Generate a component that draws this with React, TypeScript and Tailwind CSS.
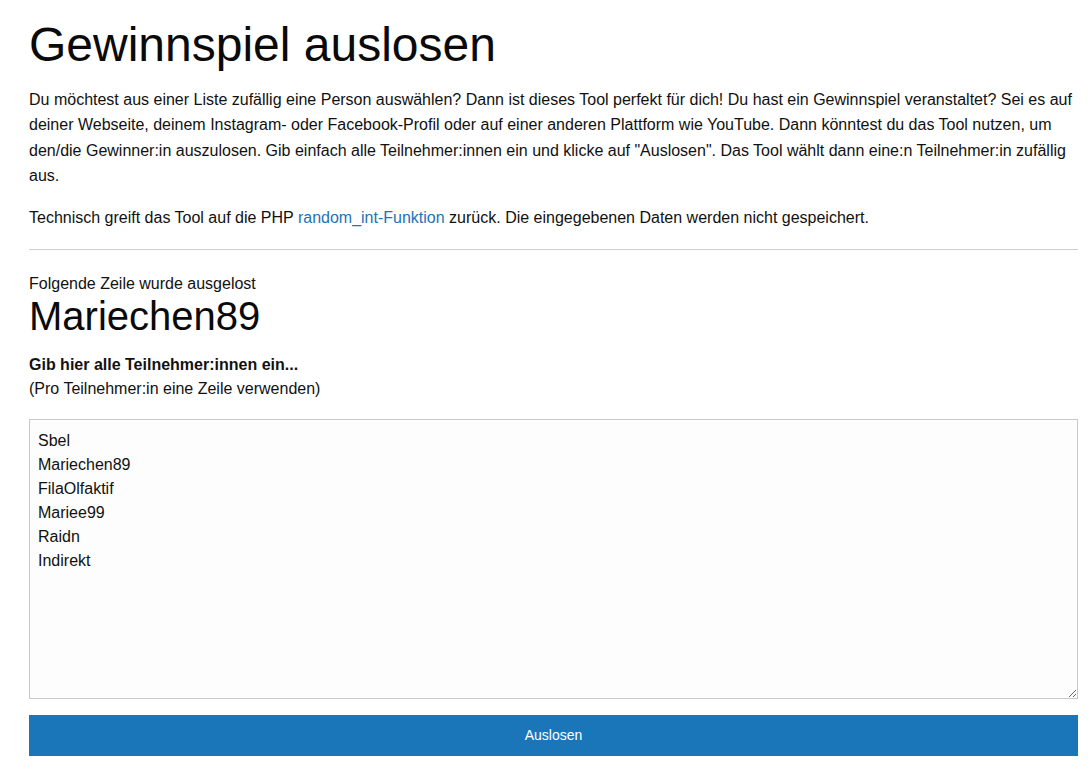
import React, { useState } from 'react';

const participants = ['Sbel', 'Mariechen89', 'FilaOlfaktif', 'Mariee99', 'Raidn', 'Indirekt'];

export default function App() {
  const [entries, setEntries] = useState(participants.join('\n'));
  const [winner, setWinner] = useState('Mariechen89');

  const draw = () => {
    const rows = entries.split('\n').map((r) => r.trim()).filter(Boolean);
    if (rows.length === 0) return;
    setWinner(rows[Math.floor(Math.random() * rows.length)]);
  };

  return (
    <div className="min-h-screen bg-white font-['Liberation_Sans',Arial,sans-serif] text-[#111]">
      <div className="pl-[29px] pr-[13px] pt-[16px] pb-4">
        <h1 className="text-[48px] leading-[1.2] font-normal text-[#0a0a0a]">Gewinnspiel auslosen</h1>

        <p className="mt-[13px] text-[16px] leading-[1.6]">
          Du möchtest aus einer Liste zufällig eine Person auswählen? Dann ist dieses Tool perfekt für dich! Du hast ein
          Gewinnspiel veranstaltet? Sei es auf deiner Webseite, deinem Instagram- oder Facebook-Profil oder auf einer
          anderen Plattform wie YouTube. Dann könntest du das Tool nutzen, um den/die Gewinner:in auszulosen. Gib einfach
          alle Teilnehmer:innen ein und klicke auf "Auslosen". Das Tool wählt dann eine:n Teilnehmer:in zufällig aus.
        </p>
        <p className="mt-4 text-[16px] leading-[1.6]">
          Technisch greift das Tool auf die PHP{' '}
          <a href="#" className="text-[#1d73b8]">
            random_int-Funktion
          </a>{' '}
          zurück. Die eingegebenen Daten werden nicht gespeichert.
        </p>

        <hr className="mt-[18px] border-0 border-t border-[#cfcfcf]" />

        <div className="mt-[21px] text-[16px] leading-[1.6]">Folgende Zeile wurde ausgelost</div>
        <div className="text-[40px] leading-none text-[#0a0a0a]">{winner}</div>

        <div className="mt-[17px] text-[16px] leading-[1.5]">
          <div className="font-bold">Gib hier alle Teilnehmer:innen ein...</div>
          <div>(Pro Teilnehmer:in eine Zeile verwenden)</div>
        </div>

        <textarea
          value={entries}
          onChange={(e) => setEntries(e.target.value)}
          className="mt-[18px] block w-full h-[280px] border border-[#c9c9c9] bg-[#fdfdfd] px-2 pt-[9px] pb-2 text-[16px] leading-[1.5] text-[#111] font-['Liberation_Sans',Arial,sans-serif] outline-none"
        />

        <button
          onClick={draw}
          className="mt-[16px] block w-full h-[41px] bg-[#1a76b9] text-white text-[14px] font-['Liberation_Sans',Arial,sans-serif]"
        >
          Auslosen
        </button>
      </div>
    </div>
  );
}
